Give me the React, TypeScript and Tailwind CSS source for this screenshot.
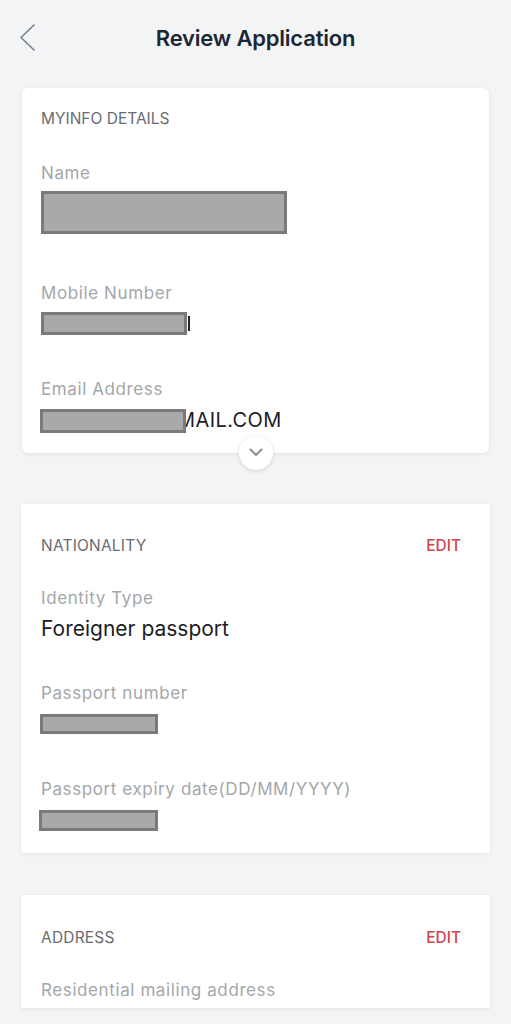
import React from "react";

function Redact({ w, h, className = "" }: { w: string; h: string; className?: string }) {
  return (
    <div
      className={`relative z-10 shrink-0 border-[3px] border-[#7a7a7a] bg-[#a9a9a9] ${w} ${h} ${className}`}
    />
  );
}

function Label({ children, className = "" }: { children: React.ReactNode; className?: string }) {
  return (
    <div className={`text-[17px] leading-none tracking-[0.6px] text-[#a4a7aa] ${className}`}>
      {children}
    </div>
  );
}

export default function App() {
  return (
    <div className="min-h-screen w-full bg-[#f3f4f6] font-['Inter',sans-serif] pb-[16px]">
      {/* Header */}
      <div className="grid h-[76px] grid-cols-[1fr_auto_1fr] items-center">
        <div className="pl-[19px]">
          <svg width="17" height="28" viewBox="0 0 17 28" fill="none">
            <polyline
              points="15,1 2,13.5 15,26"
              stroke="#7b8086"
              strokeWidth="1.6"
              strokeLinecap="round"
              strokeLinejoin="round"
            />
          </svg>
        </div>
        <div className="text-[22px] font-semibold leading-none tracking-[-0.2px] text-[#1c2733]">
          Review Application
        </div>
        <div />
      </div>

      {/* MyInfo card */}
      <div className="relative mx-[22px] mt-[12px] rounded-[6px] bg-white pb-[20px] pl-[19px] pt-[23px] shadow-[0_1px_4px_rgba(0,0,0,0.08)]">
        <div className="text-[15.5px] leading-none text-[#686c70]">MYINFO DETAILS</div>

        <Label className="mt-[38px]">Name</Label>
        <Redact w="w-[246px]" h="h-[43px]" className="mt-[9px]" />

        <Label className="mt-[51px]">Mobile Number</Label>
        <div className="mt-[10px] flex items-center">
          <Redact w="w-[146px]" h="h-[23px]" />
          <div className="ml-[1px] h-[15px] w-[2px] bg-[#222]" />
        </div>

        <Label className="mt-[46px]">Email Address</Label>
        <div className="mt-[11px] flex items-start">
          <Redact w="w-[146px]" h="h-[24px]" className="-ml-[1px]" />
          <span className="-ml-[9px] mt-[1px] text-[20px] leading-none tracking-[0.4px] text-[#1d1d1f]">
            MAIL.COM
          </span>
        </div>

        <div className="absolute bottom-[-17px] left-1/2 flex h-[34px] w-[34px] -translate-x-1/2 items-center justify-center rounded-full bg-white shadow-[0_1px_4px_rgba(0,0,0,0.15)]">
          <svg width="14" height="9" viewBox="0 0 14 9" fill="none">
            <polyline
              points="1.5,1.5 7,7 12.5,1.5"
              stroke="#8a8e93"
              strokeWidth="2"
              strokeLinecap="round"
              strokeLinejoin="round"
            />
          </svg>
        </div>
      </div>

      {/* Nationality card */}
      <div className="mx-[21px] mt-[51px] bg-white pb-[22px] pl-[20px] pr-[29px] pt-[34px] shadow-[0_1px_4px_rgba(0,0,0,0.07)]">
        <div className="flex items-start justify-between">
          <div className="text-[15.5px] leading-none tracking-[0.2px] text-[#686c70]">NATIONALITY</div>
          <div className="text-[15.5px] font-medium leading-none text-[#d2444c]">EDIT</div>
        </div>

        <Label className="mt-[37px]">Identity Type</Label>
        <div className="mt-[11px] text-[21px] leading-none text-[#1d1d1f]">Foreigner passport</div>

        <Label className="mt-[46px]">Passport number</Label>
        <Redact w="w-[118px]" h="h-[20px]" className="-ml-[1px] mt-[12px]" />

        <Label className="mt-[47px]">Passport expiry date(DD/MM/YYYY)</Label>
        <Redact w="w-[119px]" h="h-[21px]" className="-ml-[2px] mt-[12px]" />
      </div>

      {/* Address card */}
      <div className="mx-[21px] mt-[42px] bg-white pb-[9px] pl-[20px] pr-[29px] pt-[35px] shadow-[0_1px_4px_rgba(0,0,0,0.07)]">
        <div className="flex items-start justify-between">
          <div className="text-[15.5px] leading-none tracking-[0.2px] text-[#686c70]">ADDRESS</div>
          <div className="text-[15.5px] font-medium leading-none text-[#d2444c]">EDIT</div>
        </div>
        <Label className="mt-[36px]">Residential mailing address</Label>
      </div>
    </div>
  );
}
